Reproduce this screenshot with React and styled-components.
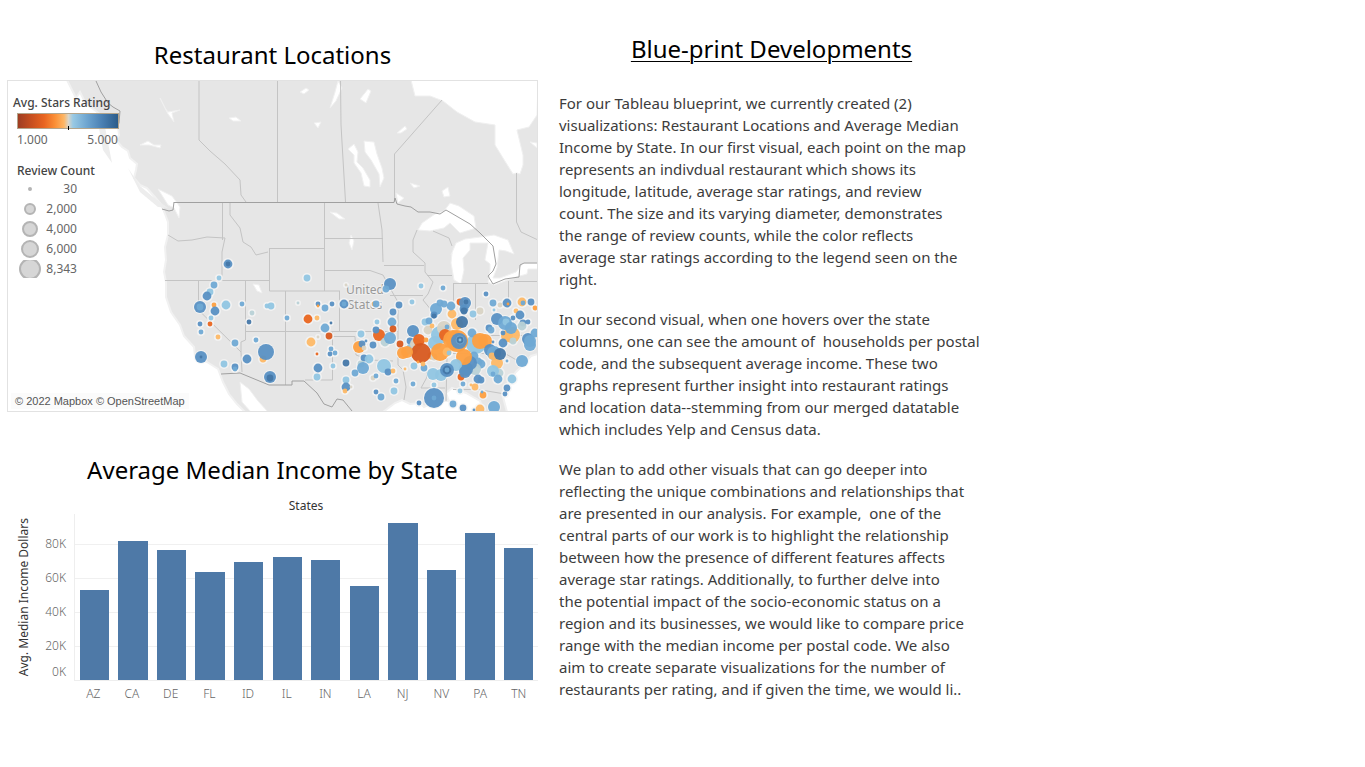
import React from "react";
import styled, { createGlobalStyle } from "styled-components";

const GlobalStyle = createGlobalStyle`
  * { box-sizing: border-box; }
  body {
    margin: 0;
    background: #fff;
    color: #000;
    font-family: "Noto Sans", "Open Sans", sans-serif;
  }
`;

const Dashboard = styled.main`
  display: grid;
  grid-template-columns: 531fr 425fr 360fr;
  column-gap: 21px;
  align-items: start;
  padding: 33px 0 32px 7px;
`;

const Charts = styled.div`
  display: flex;
  flex-direction: column;
  gap: 42px;
  padding-top: 6px;
`;

const Panel = styled.section`
  display: flex;
  flex-direction: column;
`;

const Title = styled.h2`
  margin: 0;
  font-size: 24px;
  line-height: 32px;
  font-weight: 400;
  text-align: center;
  text-decoration: ${(p) => (p.$underlined ? "underline" : "none")};
  text-decoration-thickness: 1px;
  text-underline-offset: 3px;
`;

const MapFrame = styled.div`
  position: relative;
  margin-top: 9px;
  border: 1px solid #e2e2e2;
  overflow: hidden;
`;

const MapDrawing = styled.svg`
  display: block;
  width: 100%;
  height: auto;
`;

const Legend = styled.aside`
  position: absolute;
  left: 5px;
  top: 14px;
  width: 106px;
  display: flex;
  flex-direction: column;
  font-size: 12px;
  line-height: 16px;
  color: #666;
`;

const LegendTitle = styled.h3`
  margin: 0;
  padding-left: ${(p) => (p.$indented ? "4px" : "0")};
  font-size: 12px;
  line-height: 16px;
  font-weight: 500;
  color: #444;
`;

const ColourRamp = styled.div`
  position: relative;
  height: 16px;
  margin: 2px 0 3px 4px;
  border: 1px solid #b3a58c;
  background: linear-gradient(
    to right,
    #9e3d22, #c9501f 14%, #e86420 26%, #fb8f36 37%, #fdb665 46%,
    #d9d5c9 50.5%, #98c9e4 55%, #6ea5d0 69%, #4a80b3 84%, #2b5c8a
  );

  &::after {
    content: "";
    position: absolute;
    left: 50%;
    bottom: -2px;
    width: 1px;
    height: 4px;
    background: #000;
  }
`;

const RampLabels = styled.div`
  display: flex;
  justify-content: space-between;
  padding: 0 1px 0 4px;
  margin-bottom: 15px;
`;

const SizeList = styled.ul`
  margin: 0;
  padding: 0 0 0 6px;
  list-style: none;
`;

const SizeRow = styled.li`
  display: flex;
  align-items: center;
  height: 20px;
`;

const SizeIcon = styled.svg`
  width: 22px;
  height: 18px;
  flex: none;
`;

const SizeValue = styled.span`
  width: 36px;
  text-align: right;
`;

const Credit = styled.p`
  position: absolute;
  left: 3px;
  bottom: 2px;
  margin: 0;
  padding: 0 4px;
  font-family: "Liberation Sans", Arial, sans-serif;
  font-size: 11px;
  line-height: 16px;
  color: #555;
  background: rgba(250, 250, 250, 0.8);
`;

const ChartBody = styled.div`
  display: grid;
  grid-template-columns: 31px 35px 1fr;
  grid-template-rows: 16px 167px 24px;
  padding: 12px 0 0 1px;
`;

const ColumnHeading = styled.div`
  grid-column: 3;
  font-size: 12px;
  line-height: 16px;
  text-align: center;
  color: #333;
`;

const AxisTitle = styled.div`
  grid-column: 1;
  grid-row: 2;
  justify-self: center;
  align-self: center;
  writing-mode: vertical-rl;
  transform: rotate(180deg);
  font-size: 12px;
  line-height: 16px;
  white-space: nowrap;
  color: #333;
`;

const Ticks = styled.div`
  grid-column: 2;
  grid-row: 2;
  display: flex;
  flex-direction: column;
  justify-content: flex-end;
  padding: 0 8px 1px 0;
  font-size: 12px;
  font-weight: 300;
  text-align: right;
  color: #666;
`;

const Tick = styled.span`
  line-height: 16px;
  height: ${(p) => (p.$last ? "16px" : p.$short ? "26px" : "34px")};
`;

const Plot = styled.div`
  grid-column: 3;
  grid-row: 2;
  display: flex;
  align-items: flex-end;
  border-left: 1px solid #eee;
  border-bottom: 1px solid #eee;
  background-image: repeating-linear-gradient(to top, transparent 0 33px, #f0f0f0 33px 34px);
`;

const Slot = styled.div`
  flex: 1;
  display: flex;
  justify-content: center;
`;

const Bar = styled.div`
  width: 76%;
  background: #4e79a7;
`;

const StateLabels = styled.div`
  grid-column: 3;
  display: flex;
`;

const StateLabel = styled.span`
  flex: 1;
  padding-top: 5px;
  font-size: 12px;
  line-height: 16px;
  font-weight: 300;
  text-align: center;
  color: #666;
`;

const Notes = styled.article`
  display: flex;
  flex-direction: column;
`;

const Copy = styled.div`
  padding-top: 27px;
  display: flex;
  flex-direction: column;
  gap: 18px;
`;

const Paragraph = styled.p`
  margin: 0;
  font-size: 15px;
  line-height: 22px;
  font-weight: 400;
  white-space: pre;
  color: #3c3c3c;
`;

const C = {
  d: "#4477a8",
  b: "#5890c3",
  m: "#6fa9d4",
  l: "#90c5e2",
  g: "#b8d1d6",
  t: "#d8d3c4",
  y: "#fdb866",
  o: "#fd9f40",
  r: "#e9651f",
  x: "#d7581f",
};

// x, y, radius and colour of each restaurant cluster
const POINTS = [
  [228, 264, 4, "b"], [228, 264, 2, "d"], [219, 278, 2, "l"], [214, 285, 3, "m"], [210, 292, 3, "l"],
  [207, 296, 4, "b"], [200, 307, 5, "b"], [200, 307, 3, "m"], [214, 305, 2, "o"], [215, 311, 4, "b"],
  [226, 305, 4, "l"], [242, 304, 2, "m"], [211, 318, 2, "l"], [200, 324, 2, "b"], [210, 324, 2, "r"],
  [201, 332, 2, "m"], [218, 337, 2, "y"], [235, 343, 3, "m"], [201, 357, 5, "b"], [201, 357, 1, "d"],
  [224, 364, 3, "l"], [235, 367, 3, "b"], [235, 369, 2, "m"], [247, 359, 4, "b"], [252, 313, 2, "g"],
  [249, 322, 2, "d"], [267, 306, 2, "l"], [271, 306, 3, "l"], [256, 340, 2, "m"], [263, 359, 3, "y"],
  [266, 352, 7, "b"], [270, 377, 5, "b"], [270, 378, 3, "d"], [307, 278, 3, "l"], [298, 303, 1, "g"],
  [287, 318, 2, "m"], [308, 319, 4, "r"], [317, 318, 2, "y"], [318, 304, 2, "b"], [318, 306, 1, "o"],
  [325, 308, 3, "m"], [332, 304, 2, "b"], [346, 285, 1, "t"], [344, 304, 4, "b"], [344, 304, 2, "m"],
  [390, 284, 5, "b"], [386, 289, 3, "m"], [374, 304, 2, "y"], [376, 304, 3, "m"], [399, 305, 3, "b"],
  [393, 312, 3, "b"], [392, 322, 4, "m"], [377, 322, 2, "l"], [331, 323, 1, "d"], [325, 328, 4, "m"],
  [329, 336, 3, "x"], [318, 337, 1, "t"], [311, 342, 4, "y"], [331, 349, 2, "m"], [335, 353, 2, "m"],
  [330, 354, 2, "b"], [317, 354, 1, "r"], [318, 368, 4, "b"], [317, 377, 3, "l"], [333, 366, 2, "l"],
  [346, 363, 3, "d"], [361, 334, 3, "l"], [366, 341, 1, "b"], [359, 347, 5, "o"], [362, 344, 3, "b"],
  [364, 348, 2, "t"], [373, 345, 3, "b"], [379, 335, 5, "r"], [376, 330, 3, "b"], [385, 342, 4, "g"],
  [390, 338, 5, "m"], [393, 329, 3, "x"], [400, 344, 3, "x"], [403, 353, 5, "o"], [364, 358, 3, "b"],
  [369, 359, 4, "l"], [361, 364, 3, "g"], [363, 368, 5, "m"], [355, 373, 3, "m"], [384, 366, 6, "l"],
  [388, 372, 3, "b"], [393, 371, 2, "y"], [405, 369, 1, "y"], [373, 378, 2, "t"], [376, 376, 2, "m"],
  [346, 380, 3, "l"], [346, 387, 4, "b"], [345, 391, 2, "y"], [351, 387, 1, "t"], [396, 381, 2, "m"],
  [376, 392, 2, "b"], [381, 397, 3, "m"], [394, 391, 3, "l"], [421, 286, 2, "l"], [443, 288, 2, "m"],
  [486, 294, 2, "b"], [412, 302, 2, "l"], [440, 303, 3, "m"], [444, 304, 3, "m"], [436, 309, 5, "m"],
  [434, 315, 3, "b"], [434, 316, 2, "d"], [452, 314, 4, "y"], [451, 306, 4, "m"], [460, 302, 3, "r"],
  [465, 303, 5, "b"], [464, 309, 4, "b"], [464, 311, 3, "d"], [466, 302, 2, "d"], [473, 314, 3, "l"],
  [480, 311, 3, "t"], [493, 303, 3, "m"], [494, 310, 1, "l"], [500, 305, 2, "t"], [507, 303, 4, "b"],
  [508, 304, 1, "o"], [522, 302, 4, "y"], [523, 303, 2, "m"], [531, 302, 3, "b"], [535, 308, 2, "o"],
  [516, 311, 2, "y"], [520, 315, 4, "b"], [513, 318, 2, "b"], [425, 322, 3, "l"], [429, 321, 3, "m"],
  [428, 330, 4, "t"], [413, 331, 5, "b"], [440, 335, 8, "l"], [444, 328, 6, "t"], [457, 324, 5, "y"],
  [462, 322, 5, "d"], [447, 327, 2, "m"], [432, 326, 2, "y"], [410, 341, 3, "b"], [412, 349, 5, "l"],
  [416, 344, 5, "t"], [435, 343, 6, "l"], [445, 335, 5, "r"], [476, 344, 9, "l"], [472, 333, 4, "m"],
  [457, 341, 10, "o"], [453, 340, 9, "o"], [419, 340, 5, "r"], [426, 340, 2, "o"], [431, 356, 3, "y"],
  [434, 357, 3, "t"], [421, 353, 9, "x"], [407, 352, 5, "o"], [440, 352, 8, "o"], [447, 352, 4, "y"],
  [449, 353, 2, "l"], [459, 341, 7, "b"], [460, 340, 4, "m"], [460, 340, 3, "d"], [460, 340, 1, "l"],
  [485, 341, 6, "o"], [480, 341, 7, "o"], [474, 356, 4, "m"], [478, 362, 4, "m"], [481, 364, 4, "m"],
  [475, 369, 5, "g"], [470, 363, 6, "b"], [466, 369, 6, "b"], [464, 357, 7, "o"], [456, 365, 5, "l"],
  [441, 375, 5, "l"], [433, 374, 5, "l"], [447, 370, 6, "b"], [447, 370, 4, "d"], [447, 370, 2, "m"],
  [424, 368, 3, "m"], [414, 366, 3, "l"], [418, 362, 1, "o"], [423, 364, 2, "y"], [461, 377, 3, "r"],
  [465, 372, 5, "b"], [489, 328, 3, "b"], [491, 330, 3, "m"], [497, 319, 5, "b"], [507, 336, 5, "y"],
  [512, 335, 7, "y"], [505, 323, 6, "m"], [506, 322, 3, "l"], [503, 333, 2, "b"], [511, 328, 5, "m"],
  [523, 323, 3, "b"], [528, 322, 2, "b"], [522, 326, 4, "g"], [503, 343, 4, "b"], [513, 341, 3, "g"],
  [528, 339, 5, "b"], [530, 345, 5, "m"], [530, 341, 5, "m"], [535, 333, 4, "m"], [493, 342, 1, "b"],
  [490, 350, 5, "b"], [494, 353, 6, "m"], [492, 356, 3, "y"], [497, 363, 5, "y"], [500, 354, 5, "d"],
  [507, 361, 1, "m"], [522, 361, 5, "m"], [499, 373, 4, "g"], [493, 371, 5, "l"], [498, 379, 4, "m"],
  [493, 374, 2, "m"], [512, 379, 4, "l"], [478, 379, 4, "b"], [481, 380, 3, "b"], [463, 384, 2, "m"],
  [471, 385, 1, "y"], [475, 387, 3, "y"], [460, 391, 2, "l"], [483, 395, 3, "o"], [482, 392, 1, "m"],
  [507, 388, 3, "b"], [505, 394, 2, "b"], [413, 384, 2, "m"], [434, 385, 2, "l"], [434, 398, 9, "b"],
  [434, 398, 2, "m"], [419, 403, 2, "b"], [453, 404, 3, "m"], [463, 408, 3, "b"], [474, 410, 1, "b"],
  [480, 409, 4, "y"], [494, 407, 5, "m"],
];

const LAND =
  "M67 80 L72 90 L76 98 L80 92 L86 104 L96 111 L107 120 L118 127 L119 135 L116 140 L122 147 L128 151 L130 158 L137 164 L136 170 L134 178 L140 185 L147 188 L154 196 L160 203 L163 209 L165 214 L168 222 L168 235 L165 247 L166 260 L164 272 L166 282 L166 297 L171 312 L180 325 L184 336 L194 347 L195 356 L207 362 L218 369 L223 382 L229 394 L237 404 L245 412 L383 412 L395 403 L402 400 L410 404 L420 403 L424 407 L437 401 L449 401 L446 393 L452 388 L466 393 L473 397 L480 401 L484 412 L507 412 L503 397 L504 388 L516 372 L524 364 L531 356 L538 354 L538 80 Z";

const WATERS = [
  "M411 80 L415 96 L430 96 L443 101 L457 112 L475 122 L495 125 L495 145 L503 158 L513 174 L517 173 L520 174 L523 165 L523 155 L517 130 L529 127 L537 115 L538 80 Z",
  "M418 230 L422 223 L435 214 L444 211 L450 203 L459 206 L468 212 L474 216 L476 228 L470 230 L460 233 L450 223 L444 228 L430 231 Z",
  "M452 253 L451 263 L454 280 L461 284 L464 270 L463 258 L470 250 L470 243 L488 243 L485 260 L490 264 L490 271 L488 282 L494 285 L513 278 L527 274 L528 269 L538 269 L538 263 L523 263 L516 272 L500 278 L493 278 L497 268 L499 250 L506 251 L514 254 L508 240 L494 235 L480 237 L465 239 L456 243 L451 255 Z",
  "M240 382 L249 389 L258 401 L268 412 L251 412 L242 402 Z",
  "M364 141 L374 142 L377 154 L382 168 L384 178 L380 187 L379 174 L371 160 L365 152 Z",
  "M348 149 L354 144 L358 152 L357 162 L363 168 L370 180 L370 187 L364 186 L361 173 L354 163 L354 155 Z",
  "M338 81 L342 88 L336 101 L330 108 L335 92 Z",
  "M360 99 L368 89 L371 91 L366 103 Z",
  "M397 133 L405 126 L407 129 L401 133 Z",
  "M314 123 L321 122 L318 128 Z",
  "M300 92 L306 88 L309 90 L304 94 Z",
  "M160 98 L165 108 L168 112 L180 110 L172 113 L174 122 L168 114 Z",
  "M140 145 L148 141 L154 145 L161 145 L160 148 L149 145 Z",
  "M158 189 L172 196 L180 207 L179 218 L174 208 L168 205 Z",
  "M229 118 L236 117 L241 121 L233 121 Z",
  "M253 284 L259 285 L262 293 L257 291 Z",
  "M442 191 L448 187 L450 196 L444 197 Z",
  "M396 193 L404 198 L398 203 Z",
  "M410 183 L420 186 L414 188 Z",
  "M330 212 L337 213 L345 219 L339 219 Z",
  "M351 235 L354 241 L352 250 L349 243 Z",
  "M530 142 L537 143 L537 148 Z",
];

const COUNTRY_BORDERS = [
  "M96 81 L101 92 L108 103 L113 107 L120 111 L119 123 L116 129",
  "M174 202.500 L394 202.500 L395 198 L397 204 L405 206 L411 207 L418 212 L430 212 L440 214 L446 210 L470 224 L480 233 L490 243 L493 246 L496 264 L493 271 L488 276 L493 284 L505 279 L519 277 L520 265 L524 263 L538 263",
  "M162 209 L169 211 L173 210 L174 202",
  "M221 374 L240 373 L269 385 L292 385 L292 381 L304 381 L317 393 L324 404 L332 407 L337 399 L343 400 L352 411",
];

const STATE_BORDERS = [
  "M199 80 L199 140 L210 151 L225 164 L240 180 L241 195 L246 202",
  "M277.500 80 L277.500 202", "M340.500 80 L341 125 L345.500 202",
  "M442 100 L394.500 154 L394.500 202", "M516.500 173 L516.500 222 L521 232 L538 240",
  "M168 235 L178 241 L192 240 L207 237 L225 238 L222 252 L222 280", "M222.500 202 L222.500 240",
  "M230 202 L230 215 L240 228 L243 242 L251 247 L256 255 L268 252",
  "M165 280.500 L269 280.500", "M198.500 281 L198.500 310 L241 352 L242 372", "M245.500 281 L245.500 340 L241 342 L241 352",
  "M269 248.500 L324 248.500", "M269.500 248 L269.500 291 L340 291", "M324.500 202 L324.500 291",
  "M324 238.500 L383 238.500", "M378 203 L382 230 L383 262", "M324 270.500 L370 270.500 L383 275 L390 288 L398 302",
  "M246 331.500 L398 331.500", "M285.500 291 L285.500 385", "M339.500 291 L339.500 331", "M332.500 332 L332.500 380 L305 380",
  "M333 336.500 L355 336.500 L356 355 L370 360 L393 361", "M398 305 L398 365 L403 370 L406 387 L404 400",
  "M417 230 L413 240 L413 252 L425 263 L425 272 L433 282 L428 294 L423 300 L432 311",
  "M433 231 L449 238 L452 246", "M384 265.500 L424 265.500", "M427 275.500 L452 275.500",
  "M390 295.500 L423 295.500", "M453.500 283 L453.500 320 L447 333", "M453 283.500 L488 283.500", "M475.500 284 L475.500 320",
  "M514 281.500 L538 281.500", "M508.500 281 L508.500 299", "M438 335.500 L505 335.500 L538 335.500", "M432 353.500 L505 353.500 L520 362",
  "M426.500 363 L426.500 378 L421 388 L445 388", "M447 357 L446 401", "M470 354 L475 389 L505 394", "M453 389.500 L475 389.500",
];

const SIZES = [["30", 2], ["2,000", 6], ["4,000", 8], ["6,000", 9], ["8,343", 11]];

const INCOME = [
  ["AZ", 90], ["CA", 139], ["DE", 130], ["FL", 108], ["ID", 118], ["IL", 123],
  ["IN", 120], ["LA", 94], ["NJ", 157], ["NV", 110], ["PA", 147], ["TN", 132],
];

const TICKS = ["80K", "60K", "40K", "20K", "0K"];

const COPY = [
  `For our Tableau blueprint, we currently created (2)
visualizations: Restaurant Locations and Average Median
Income by State. In our first visual, each point on the map
represents an indivdual restaurant which shows its
longitude, latitude, average star ratings, and review
count. The size and its varying diameter, demonstrates
the range of review counts, while the color reflects
average star ratings according to the legend seen on the
right.`,
  `In our second visual, when one hovers over the state
columns, one can see the amount of  households per postal
code, and the subsequent average income. These two
graphs represent further insight into restaurant ratings
and location data--stemming from our merged datatable
which includes Yelp and Census data.`,
  `We plan to add other visuals that can go deeper into
reflecting the unique combinations and relationships that
are presented in our analysis. For example,  one of the
central parts of our work is to highlight the relationship
between how the presence of different features affects
average star ratings. Additionally, to further delve into
the potential impact of the socio-economic status on a
region and its businesses, we would like to compare price
range with the median income per postal code. We also
aim to create separate visualizations for the number of
restaurants per rating, and if given the time, we would li..`,
];

function RestaurantMap() {
  return (
    <MapDrawing viewBox="8 81 529 330" role="img" aria-label="Map of restaurant locations in North America">
      <path d={LAND} fill="#e6e6e6" stroke="#f1f1f1" strokeWidth="2" />
      <path d="M96 112 L104 122 L112 163 L103 150 Z M128 168 L140 186 L152 196 L168 208 L158 207 L140 192 Z" fill="#ededed" />
      {WATERS.map((d) => (
        <path key={d} d={d} fill="#fff" stroke="#f0f0f0" strokeWidth="1" />
      ))}
      {STATE_BORDERS.map((d) => (
        <path key={d} d={d} fill="none" stroke="#c4c4c4" strokeWidth="1" />
      ))}
      {COUNTRY_BORDERS.map((d) => (
        <path key={d} d={d} fill="none" stroke="#a0a0a0" strokeWidth="1" />
      ))}
      <text fill="#999" fontSize="12" textAnchor="middle" stroke="#eee" strokeWidth="2" paintOrder="stroke">
        <tspan x="365" y="294">United</tspan>
        <tspan x="365" y="309">States</tspan>
      </text>
      {POINTS.map(([x, y, r], i) => (
        <circle key={i} cx={x} cy={y} r={r + 2} fill="#f5f5f5" fillOpacity="0.8" />
      ))}
      {POINTS.map(([x, y, r, c], i) => (
        <circle key={i} cx={x} cy={y} r={r > 4 ? r + 1 : r + 0.4} fill={C[c]} fillOpacity="0.95" />
      ))}
    </MapDrawing>
  );
}

export default function App() {
  return (
    <>
      <GlobalStyle />
      <Dashboard>
        <Charts>
          <Panel>
            <Title>Restaurant Locations</Title>
            <MapFrame>
              <RestaurantMap />
              <Legend>
                <LegendTitle>Avg. Stars Rating</LegendTitle>
                <ColourRamp />
                <RampLabels>
                  <span>1.000</span>
                  <span>5.000</span>
                </RampLabels>
                <LegendTitle $indented>Review Count</LegendTitle>
                <SizeList>
                  {SIZES.map(([label, r]) => (
                    <SizeRow key={label}>
                      <SizeIcon viewBox="0 0 22 18">
                        <circle cx="11" cy="9" r={r - 1} fill="#d6d6d6" stroke="#b4b4b4" strokeWidth="2" />
                      </SizeIcon>
                      <SizeValue>{label}</SizeValue>
                    </SizeRow>
                  ))}
                </SizeList>
              </Legend>
              <Credit>© 2022 Mapbox © OpenStreetMap</Credit>
            </MapFrame>
          </Panel>
          <Panel>
            <Title>Average Median Income by State</Title>
            <ChartBody>
              <ColumnHeading>States</ColumnHeading>
              <AxisTitle>Avg. Median Income Dollars</AxisTitle>
              <Ticks>
                {TICKS.map((t, i) => (
                  <Tick key={t} $short={i === 3} $last={i === 4}>{t}</Tick>
                ))}
              </Ticks>
              <Plot>
                {INCOME.map(([state, height]) => (
                  <Slot key={state}>
                    <Bar style={{ height }} />
                  </Slot>
                ))}
              </Plot>
              <StateLabels>
                {INCOME.map(([state]) => (
                  <StateLabel key={state}>{state}</StateLabel>
                ))}
              </StateLabels>
            </ChartBody>
          </Panel>
        </Charts>
        <Notes>
          <Title $underlined>Blue-print Developments</Title>
          <Copy>
            {COPY.map((text) => (
              <Paragraph key={text}>{text}</Paragraph>
            ))}
          </Copy>
        </Notes>
      </Dashboard>
    </>
  );
}
